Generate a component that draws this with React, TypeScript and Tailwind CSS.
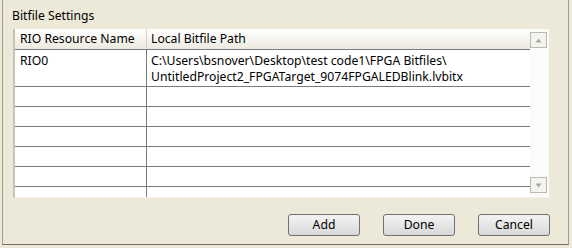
export default function App() {
  const blank = [0, 1, 2, 3, 4];
  return (
    <div className="w-[572px] h-[248px] bg-[#ece9d8] overflow-hidden text-[12.2px] leading-[16px] text-black" style={{ fontFamily: '"Noto Sans", "Open Sans", sans-serif' }}>
      <div className="ml-[2px] w-[567px] h-[245px] border-l border-r border-b border-l-[#a39d8c] border-r-[#a39d8c] border-b-[#7d6b58] flex flex-col">
        {/* Title */}
        <div className="pl-[9px] pt-[8px] h-[29px]">Bitfile Settings</div>

        {/* Table */}
        <div className="ml-[10px] w-[536px] h-[169px] flex bg-white border-l-2 border-l-[#c6c3b6] border-b border-b-[#f6f3e6]">
          <div className="flex-1 flex flex-col">
            {/* Header */}
            <div className="h-[21px] flex border-b border-[#7a7a7a] bg-gradient-to-b from-white to-[#eceadf]">
              <div className="w-[132px] border-r border-[#d4d0c4] pl-[5px] pt-[2px]">RIO Resource Name</div>
              <div className="flex-1 pl-[4px] pt-[2px]">Local Bitfile Path</div>
            </div>
            {/* Data row */}
            <div className="h-[37px] flex border-b border-[#7a7a7a]">
              <div className="w-[132px] border-r border-[#7a7a7a] pl-[5px] pt-[3px]">RIO0</div>
              <div className="flex-1 pl-[4px] pt-[3px]">
                <div>C:\Users\bsnover\Desktop\test code1\FPGA Bitfiles\</div>
                <div>UntitledProject2_FPGATarget_9074FPGALEDBlink.lvbitx</div>
              </div>
            </div>
            {blank.map((i) => (
              <div key={i} className="h-[20px] flex border-b border-[#7a7a7a]">
                <div className="w-[132px] border-r border-[#7a7a7a]" />
                <div className="flex-1" />
              </div>
            ))}
            <div className="flex-1 flex">
              <div className="w-[132px] border-r border-[#7a7a7a]" />
              <div className="flex-1" />
            </div>
          </div>
          {/* Scrollbar */}
          <div className="w-[19px] flex flex-col justify-between items-start pt-[3px] pb-[4px] bg-[#fbfbf9]">
            <div className="w-[17px] h-[16px] border border-[#b9b9b2] bg-[#f4f3ee] flex items-center justify-center">
              <svg width="7" height="5" viewBox="0 0 7 5"><path d="M3.5 0.5 L6.5 4.5 L0.5 4.5 Z" fill="#a9a9a3" /></svg>
            </div>
            <div className="w-[17px] h-[16px] border border-[#b9b9b2] bg-[#f4f3ee] flex items-center justify-center">
              <svg width="7" height="5" viewBox="0 0 7 5"><path d="M0.5 0.5 L6.5 0.5 L3.5 4.5 Z" fill="#a9a9a3" /></svg>
            </div>
          </div>
        </div>

        {/* Buttons */}
        <div className="flex justify-end gap-[23px] pr-[18px] pt-[16px]">
          {["Add", "Done", "Cancel"].map((t) => (
            <button key={t} className="w-[72px] h-[22px] rounded-[3px] border border-[#707070] bg-gradient-to-b from-[#f4f4f4] to-[#d8d8d8] flex items-center justify-center">
              {t}
            </button>
          ))}
        </div>
      </div>
    </div>
  );
}
